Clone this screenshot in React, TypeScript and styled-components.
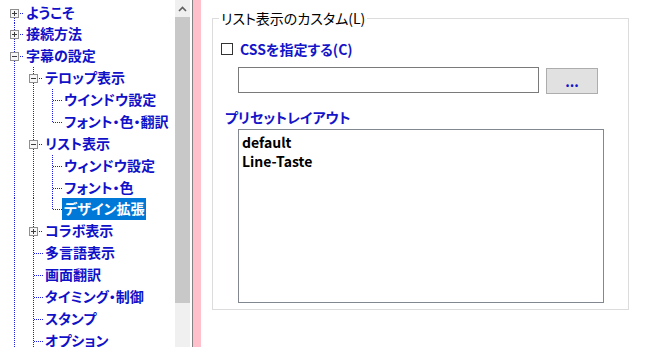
import React from "react";
import styled, { createGlobalStyle } from "styled-components";

const GlobalStyle = createGlobalStyle`
  html, body {
    margin: 0;
    padding: 0;
    background: #ffffff;
  }
  body {
    font-family: "Noto Sans CJK JP", "Noto Sans", sans-serif;
    font-feature-settings: "palt";
  }
`;

type TreeItem = {
  label: string;
  guides: boolean[]; // ancestor columns that still carry a vertical line
  up: boolean;
  down: boolean;
  box?: "plus" | "minus";
  selected?: boolean;
};

const items: TreeItem[] = [
  { label: "ようこそ", guides: [], up: false, down: true, box: "plus" },
  { label: "接続方法", guides: [], up: true, down: true, box: "plus" },
  { label: "字幕の設定", guides: [], up: true, down: true, box: "minus" },
  { label: "テロップ表示", guides: [true], up: true, down: true, box: "minus" },
  { label: "ウインドウ設定", guides: [true, true], up: true, down: true },
  { label: "フォント・色・翻訳", guides: [true, true], up: true, down: false },
  { label: "リスト表示", guides: [true], up: true, down: true, box: "minus" },
  { label: "ウィンドウ設定", guides: [true, true], up: true, down: true },
  { label: "フォント・色", guides: [true, true], up: true, down: true },
  { label: "デザイン拡張", guides: [true, true], up: true, down: false, selected: true },
  { label: "コラボ表示", guides: [true], up: true, down: true, box: "plus" },
  { label: "多言語表示", guides: [true], up: true, down: true },
  { label: "画面翻訳", guides: [true], up: true, down: true },
  { label: "タイミング・制御", guides: [true], up: true, down: true },
  { label: "スタンプ", guides: [true], up: true, down: true },
  { label: "オプション", guides: [true], up: true, down: true },
];

const CELL = 19;
const ROW = 21.875;
const LINE = "#1c1ce0";

const Page = styled.div`
  display: flex;
  width: 663px;
  height: 347px;
  overflow: hidden;
  background: #ffffff;
`;

const TreePane = styled.div`
  width: 170px;
  padding: 1.5px 0 0 5px;
  overflow: hidden;
  background: #ffffff;
`;

const TreeRow = styled.div`
  display: flex;
  align-items: stretch;
  height: ${ROW}px;
  white-space: nowrap;
`;

const TreeLabel = styled.span<{ $selected?: boolean }>`
  display: inline-block;
  height: ${ROW}px;
  line-height: ${ROW}px;
  padding: 0 2px;
  font-size: 14px;
  font-weight: bold;
  color: ${(p) => (p.$selected ? "#ffffff" : "#1010c8")};
  background: ${(p) => (p.$selected ? "#0078d7" : "transparent")};
`;

const ScrollBar = styled.div`
  display: flex;
  flex-direction: column;
  width: 15px;
  background: #f0f0f0;
`;

const ScrollArrow = styled.div`
  display: flex;
  align-items: center;
  justify-content: center;
  height: 17px;
`;

const ScrollThumb = styled.div`
  height: 286px;
  background: #c8c8c8;
`;

const Splitter = styled.div`
  width: 1px;
  margin-left: 2px;
  background: #838383;
`;

const PinkBar = styled.div`
  width: 8px;
  background: #ffc0cb;
`;

const RightPane = styled.div`
  flex: 1;
  padding-left: 11px;
  background: #ffffff;
`;

const GroupBox = styled.fieldset`
  box-sizing: border-box;
  width: 417px;
  margin: 8px 0 0 0;
  padding: 10px 0 6px 8px;
  border: 1px solid #dcdcdc;
  min-inline-size: 0;
`;

const GroupLegend = styled.legend`
  margin-left: -2px;
  padding: 0 2px;
  font-size: 14px;
  line-height: 21px;
  color: #000000;
`;

const CheckRow = styled.label`
  display: flex;
  align-items: center;
  height: 20px;
  gap: 7px;
`;

const CheckBox = styled.span`
  box-sizing: border-box;
  width: 12px;
  height: 12px;
  border: 1px solid #333333;
  background: #ffffff;
`;

const BlueLabel = styled.span`
  font-size: 14px;
  font-weight: bold;
  line-height: 20px;
  color: #1414c8;
`;

const InputRow = styled.div`
  display: flex;
  align-items: flex-start;
  gap: 7px;
  margin: 8px 0 0 17px;
`;

const PathInput = styled.div`
  box-sizing: border-box;
  width: 301px;
  height: 26px;
  border: 1px solid #7a7a7a;
  background: #ffffff;
`;

const BrowseButton = styled.div`
  box-sizing: border-box;
  display: flex;
  align-items: center;
  justify-content: center;
  width: 52px;
  height: 26px;
  margin-top: 1px;
  border: 1px solid #adadad;
  background: #e1e1e1;
  font-size: 14px;
  font-weight: bold;
  color: #1414c8;
`;

const PresetLabel = styled(BlueLabel)`
  display: block;
  height: 20px;
  margin: 13px 0 0 4px;
`;

const PresetList = styled.div`
  box-sizing: border-box;
  width: 366px;
  height: 174px;
  margin: 2px 0 0 17px;
  padding: 3px 3px;
  border: 1px solid #828790;
  background: #ffffff;
`;

const PresetItem = styled.div`
  font-size: 14px;
  font-weight: bold;
  line-height: 19px;
  color: #000000;
`;

function TreeGlyph({ item }: { item: TreeItem }) {
  const level = item.guides.length;
  const w = CELL * (level + 1);
  const ox = level * CELL;
  const cx = ox + 9.5;
  const cy = 11.5;
  const h = 22;
  return (
    <svg width={w} height={h} style={{ flex: "none" }} shapeRendering="crispEdges">
      {item.guides.map((on, i) =>
        on ? (
          <line key={i} x1={i * CELL + 9.5} y1={0} x2={i * CELL + 9.5} y2={h} stroke={LINE} strokeDasharray="1 1" />
        ) : null
      )}
      {item.up && <line x1={cx} y1={0} x2={cx} y2={cy} stroke={LINE} strokeDasharray="1 1" />}
      {item.down && <line x1={cx} y1={cy} x2={cx} y2={h} stroke={LINE} strokeDasharray="1 1" />}
      <line x1={item.box ? ox + 15 : cx} y1={cy} x2={w} y2={cy} stroke={LINE} strokeDasharray="1 1" />
      {item.box && (
        <g>
          <rect x={ox + 5.5} y={7.5} width={8} height={8} fill="#f7f7f7" stroke="#8f8f8f" />
          <line x1={ox + 7} y1={cy} x2={ox + 12} y2={cy} stroke="#3c3c3c" />
          {item.box === "plus" && <line x1={cx} y1={9} x2={cx} y2={14} stroke="#3c3c3c" />}
        </g>
      )}
    </svg>
  );
}

export default function App() {
  return (
    <>
      <GlobalStyle />
      <Page>
        <TreePane>
          {items.map((item, i) => (
            <TreeRow key={i}>
              <TreeGlyph item={item} />
              <TreeLabel $selected={item.selected}>{item.label}</TreeLabel>
            </TreeRow>
          ))}
        </TreePane>
        <ScrollBar>
          <ScrollArrow>
            <svg width="9" height="6" viewBox="0 0 9 6">
              <path d="M1 5 L4.5 1.5 L8 5" fill="none" stroke="#606060" strokeWidth="1.6" />
            </svg>
          </ScrollArrow>
          <ScrollThumb />
        </ScrollBar>
        <Splitter />
        <PinkBar />
        <RightPane>
          <GroupBox>
            <GroupLegend>リスト表示のカスタム(L)</GroupLegend>
            <CheckRow>
              <CheckBox />
              <BlueLabel>CSSを指定する(C)</BlueLabel>
            </CheckRow>
            <InputRow>
              <PathInput />
              <BrowseButton>...</BrowseButton>
            </InputRow>
            <PresetLabel>プリセットレイアウト</PresetLabel>
            <PresetList>
              <PresetItem>default</PresetItem>
              <PresetItem>Line-Taste</PresetItem>
            </PresetList>
          </GroupBox>
        </RightPane>
      </Page>
    </>
  );
}
